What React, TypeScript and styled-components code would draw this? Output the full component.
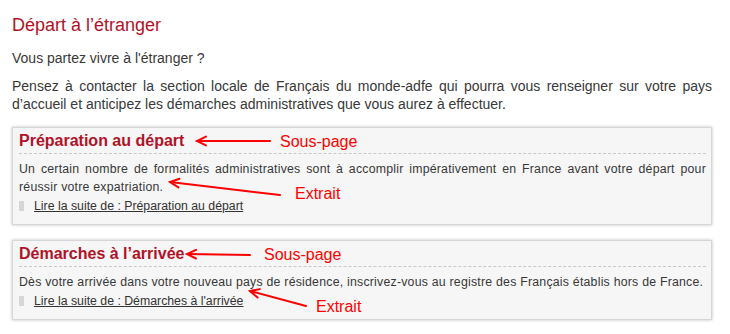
import React from "react";
import styled, { createGlobalStyle } from "styled-components";

const GlobalStyle = createGlobalStyle`
  html, body {
    margin: 0;
    padding: 0;
    background: #ffffff;
  }
  body {
    font-family: "Liberation Sans", Arial, sans-serif;
  }
`;

const Page = styled.div`
  position: relative;
  width: 730px;
  height: 334px;
  box-sizing: border-box;
  padding: 14px 18px 0 12px;
  display: flex;
  flex-direction: column;
  color: #383838;
  overflow: hidden;
`;

const Title = styled.h1`
  margin: 0 0 13px;
  font-size: 18px;
  line-height: 22px;
  font-weight: normal;
  color: #b01228;
`;

const Para = styled.p<{ $gap?: number }>`
  margin: 0 0 ${({ $gap }) => $gap ?? 10}px;
  font-size: 14px;
  line-height: 18px;
  text-align: justify;
`;

const CardList = styled.div`
  display: flex;
  flex-direction: column;
  gap: 15px;
`;

const Card = styled.section`
  background: #f6f6f6;
  border: 1px solid #d6d6d6;
  box-shadow: 0 0 3px rgba(0, 0, 0, 0.25);
  padding: 3px 5px 9px 6px;
`;

const CardTitle = styled.h2`
  margin: 0;
  padding-bottom: 2px;
  font-size: 16px;
  line-height: 20px;
  font-weight: bold;
  color: #b01228;
  border-bottom: 1px dashed #c8c8c8;
`;

const Excerpt = styled.p`
  margin: 6px 0 0;
  font-size: 12.3px;
  letter-spacing: 0.23px;
  line-height: 18px;
  text-align: justify;
`;

const More = styled.div`
  display: flex;
  align-items: center;
  gap: 10px;
  margin-top: 1px;
  font-size: 12.3px;
  line-height: 18px;
`;

const MoreBar = styled.span`
  width: 5px;
  height: 10px;
  background: #d6d6d6;
`;

const MoreLink = styled.a`
  color: #333;
  text-decoration: underline;
`;

const Note = styled.span<{ $x: number; $y: number }>`
  position: absolute;
  left: ${({ $x }) => $x}px;
  top: ${({ $y }) => $y}px;
  font-size: 16px;
  line-height: 18px;
  color: #ff0000;
  white-space: nowrap;
`;

const Overlay = styled.svg`
  position: absolute;
  left: 0;
  top: 0;
  pointer-events: none;
`;

type Arrow = { x1: number; y1: number; x2: number; y2: number };

const arrows: Arrow[] = [
  { x1: 270, y1: 141, x2: 197, y2: 141 },
  { x1: 280, y1: 195, x2: 170, y2: 182 },
  { x1: 250, y1: 255, x2: 187, y2: 254 },
  { x1: 306, y1: 306, x2: 250, y2: 291 },
];

const head = (a: Arrow) => {
  const ang = Math.atan2(a.y1 - a.y2, a.x1 - a.x2);
  const len = 10;
  const spread = 0.45;
  const p1 = [a.x2 + len * Math.cos(ang + spread), a.y2 + len * Math.sin(ang + spread)];
  const p2 = [a.x2 + len * Math.cos(ang - spread), a.y2 + len * Math.sin(ang - spread)];
  return `M${p1[0]},${p1[1]} L${a.x2},${a.y2} L${p2[0]},${p2[1]}`;
};

const cards = [
  {
    title: "Préparation au départ",
    text: "Un certain nombre de formalités administratives sont à accomplir impérativement en France avant votre départ pour réussir votre expatriation.",
  },
  {
    title: "Démarches à l’arrivée",
    text: "Dès votre arrivée dans votre nouveau pays de résidence, inscrivez-vous au registre des Français établis hors de France.",
  },
];

export default function App() {
  return (
    <>
      <GlobalStyle />
      <Page>
        <Title>Départ à l’étranger</Title>
        <Para $gap={10}>Vous partez vivre à l'étranger ?</Para>
        <Para $gap={14}>
          Pensez à contacter la section locale de Français du monde-adfe qui pourra vous renseigner sur votre pays
          d’accueil et anticipez les démarches administratives que vous aurez à effectuer.
        </Para>
        <CardList>
          {cards.map((c) => (
            <Card key={c.title}>
              <CardTitle>{c.title}</CardTitle>
              <Excerpt>{c.text}</Excerpt>
              <More>
                <MoreBar />
                <MoreLink href="#">Lire la suite de : {c.title.replace("’", "'")}</MoreLink>
              </More>
            </Card>
          ))}
        </CardList>
        <Overlay width={730} height={334}>
          {arrows.map((a, i) => (
            <g key={i} stroke="#ff0000" strokeWidth={2} fill="none" strokeLinecap="round">
              <line x1={a.x1} y1={a.y1} x2={a.x2} y2={a.y2} />
              <path d={head(a)} />
            </g>
          ))}
        </Overlay>
        <Note $x={280} $y={133}>Sous-page</Note>
        <Note $x={295} $y={185}>Extrait</Note>
        <Note $x={264} $y={246}>Sous-page</Note>
        <Note $x={316} $y={298}>Extrait</Note>
      </Page>
    </>
  );
}
